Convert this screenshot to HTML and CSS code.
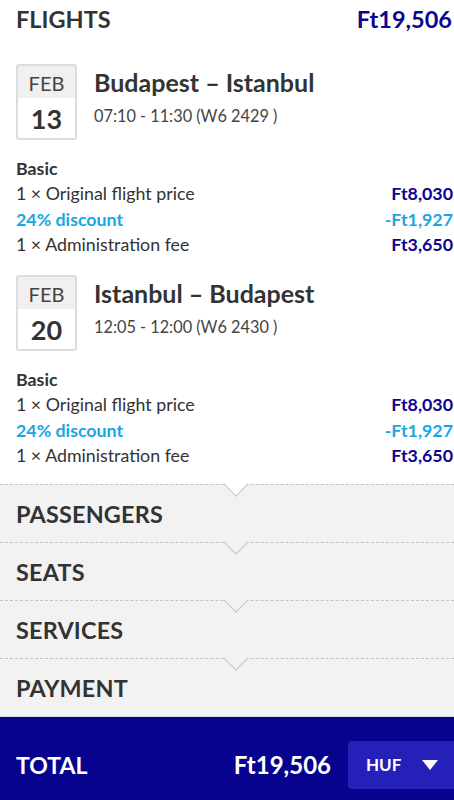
FILE: index.html
```html
<!DOCTYPE html>
<html>
<head>
<meta charset="utf-8">
<link rel="stylesheet" href="styles.css">
</head>
<body>
<div class="page">
  <div class="header">
    <span class="header-title">FLIGHTS</span>
    <span class="header-price">Ft19,506</span>
  </div>

  <div class="flight">
    <div class="flight-top">
      <div class="datebox">
        <div class="month">FEB</div>
        <div class="day">13</div>
      </div>
      <div class="route">
        <div class="route-title">Budapest – Istanbul</div>
        <div class="route-time">07:10 - 11:30 (W6 2429 )</div>
      </div>
    </div>
    <div class="lines">
      <div class="fare">Basic</div>
      <div class="line"><span>1 × Original flight price</span><span class="amt">Ft8,030</span></div>
      <div class="line disc"><span>24% discount</span><span class="amt">-Ft1,927</span></div>
      <div class="line"><span>1 × Administration fee</span><span class="amt">Ft3,650</span></div>
    </div>
  </div>

  <div class="flight">
    <div class="flight-top">
      <div class="datebox">
        <div class="month">FEB</div>
        <div class="day">20</div>
      </div>
      <div class="route">
        <div class="route-title">Istanbul – Budapest</div>
        <div class="route-time">12:05 - 12:00 (W6 2430 )</div>
      </div>
    </div>
    <div class="lines">
      <div class="fare">Basic</div>
      <div class="line"><span>1 × Original flight price</span><span class="amt">Ft8,030</span></div>
      <div class="line disc"><span>24% discount</span><span class="amt">-Ft1,927</span></div>
      <div class="line"><span>1 × Administration fee</span><span class="amt">Ft3,650</span></div>
    </div>
  </div>

  <div class="section first">PASSENGERS</div>
  <div class="section">SEATS</div>
  <div class="section">SERVICES</div>
  <div class="section">PAYMENT</div>

  <div class="footer">
    <span class="total-label">TOTAL</span>
    <span class="total-price">Ft19,506</span>
    <div class="currency">
      <span>HUF</span>
      <span class="caret"></span>
    </div>
  </div>
</div>
</body>
</html>
```

FILE: styles.css
```css
* { box-sizing: border-box; }
html, body {
  margin: 0;
  padding: 0;
  background: #fff;
}
body {
  font-family: Lato, "Open Sans", sans-serif;
  color: #333;
  width: 454px;
  height: 800px;
  overflow: hidden;
}
.page {
  display: flex;
  flex-direction: column;
  height: 800px;
}
.header {
  display: flex;
  justify-content: space-between;
  align-items: center;
  height: 37px;
  padding: 0 2px 0 16px;
  font-weight: 700;
  font-size: 23.5px;
}
.header-title { color: #333; }
.header-price { color: #0b0590; }

.flight {
  padding: 27px 1px 0 16px;
}
.flight + .flight { padding-top: 18px; }
.flight-top {
  display: flex;
  align-items: flex-start;
}
.datebox {
  width: 61px;
  height: 76px;
  border: 2px solid #dcdcdc;
  border-radius: 3px;
  display: flex;
  flex-direction: column;
  overflow: hidden;
  flex-shrink: 0;
}
.month {
  height: 32px;
  background: #f0f0f0;
  display: flex;
  align-items: center;
  justify-content: center;
  font-size: 20px;
  color: #444;
  padding-top: 1px;
}
.day {
  flex: 1;
  display: flex;
  align-items: center;
  justify-content: center;
  font-size: 27px;
  font-weight: 700;
  color: #333;
}
.route {
  margin-left: 17px;
  padding-top: 3px;
}
.route-title {
  font-size: 25px;
  font-weight: 700;
  line-height: 30px;
  color: #333;
}
.route-time {
  font-size: 16.3px;
  color: #444;
  line-height: 22px;
  margin-top: 8px;
}
.lines {
  margin-top: 16px;
  font-size: 17.8px;
  line-height: 25.3px;
}
.fare {
  font-weight: 700;
  color: #333;
}
.line {
  display: flex;
  justify-content: space-between;
  color: #333;
}
.line .amt {
  font-weight: 700;
  color: #0b0590;
}
.line.disc, .line.disc .amt {
  color: #1aa6e2;
  font-weight: 700;
}

.section {
  position: relative;
  height: 58px;
  background: #f2f2f2;
  border-top: 1px dashed #c4c4c4;
  display: flex;
  align-items: center;
  padding-left: 16px;
  font-size: 23.4px;
  font-weight: 700;
  color: #333;
  letter-spacing: 0.2px;
}
.section.first { margin-top: 16px; }
.section::before {
  content: "";
  position: absolute;
  left: 227px;
  top: -10px;
  width: 17px;
  height: 17px;
  background: #f2f2f2;
  border-right: 1px solid #c4c4c4;
  border-bottom: 1px solid #c4c4c4;
  transform: rotate(45deg);
}
.section.first::before {
  background: #fff;
}

.footer {
  flex: 1;
  background: #07038e;
  display: flex;
  align-items: center;
  padding: 12px 0 0 16px;
  color: #fff;
  font-weight: 700;
  border-top: 1px solid #d8d8e6;
}
.total-label {
  font-size: 23px;
  flex: 1;
}
.total-price {
  font-size: 24px;
  margin-right: 17px;
}
.currency {
  width: 106px;
  height: 48px;
  background: #2420b8;
  border-radius: 4px 0 0 4px;
  display: flex;
  align-items: center;
  padding-left: 18px;
  font-size: 17px;
}
.caret {
  margin-left: 21px;
  width: 0;
  height: 0;
  border-left: 8px solid transparent;
  border-right: 8px solid transparent;
  border-top: 10px solid #fff;
}
```
